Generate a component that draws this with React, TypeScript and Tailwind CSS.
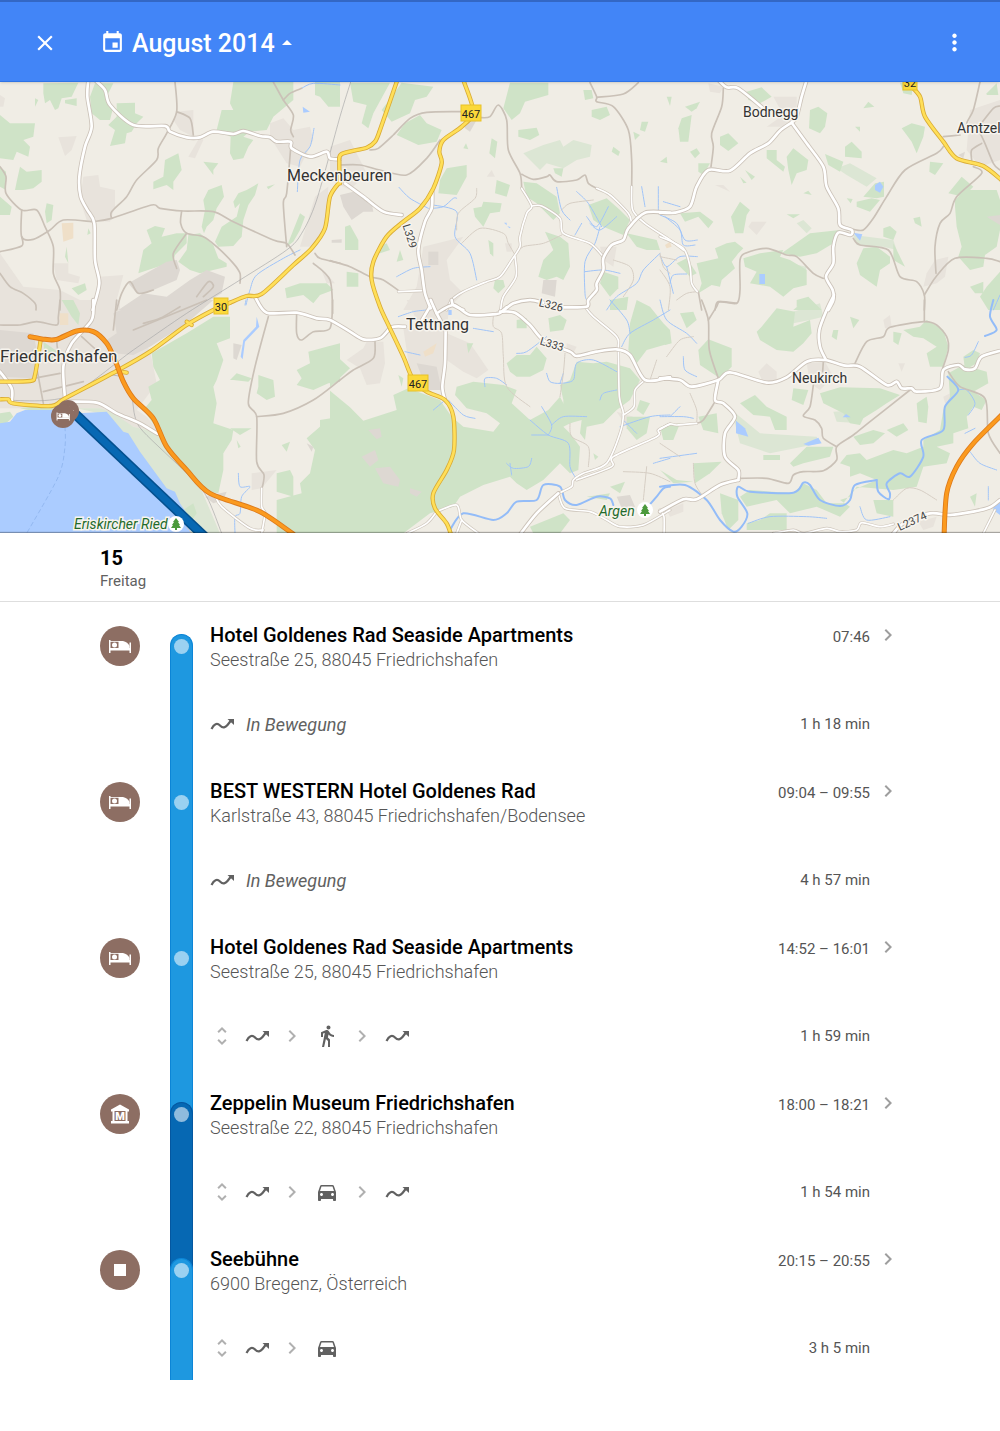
import type { ComponentType } from "react";
import {
  MdArrowDropUp,
  MdChevronRight,
  MdClose,
  MdDirectionsCar,
  MdDirectionsWalk,
  MdEvent,
  MdMoreVert,
  MdUnfoldMore,
} from "react-icons/md";

type Layer =
  | "urban"
  | "park"
  | "meadow"
  | "built"
  | "sand"
  | "water"
  | "stream"
  | "river"
  | "lane"
  | "minor"
  | "street"
  | "road"
  | "yellow"
  | "orange"
  | "rail";

interface Tile {
  x: number;
  y: number;
  shapes: Partial<Record<Layer, string[]>>;
}

// Tile geometry is stored at three units per map pixel.
const tiles: Tile[] = [
  {
    x: 0,
    y: 0,
    shapes: {
      urban: [
        "250,530 295,525 300,560 345,570 345,620 330,665 260,660 240,600",
        "810,370 850,355 880,390 930,380 940,420 900,500 860,490 810,410",
        "530,335 580,330 580,410 540,390 520,360",
        "300,830 370,825 350,900 340,930 270,930 300,880",
        "160,790 205,790 205,820 240,830 235,850 170,840",
        "175,412 230,408 215,450 195,468",
        "600,410 565,470 585,475 610,420",
        "0,760 70,860 180,870 240,900 240,930 0,930",
        "945,590 985,560 980,660 940,740 900,740",
        "0,285 15,295 10,320 0,320",
        "960,800 1005,850 980,850",
      ],
      built: [
        "385,850 500,785 530,780 540,810 530,840 460,870 430,882 410,880",
        "355,930 430,880 500,890 570,840 620,810 675,830 665,880 580,930",
      ],
      park: [
        "0,345 30,370 105,370 100,410 70,420 90,440 85,470 50,455 40,480 0,475",
        "60,500 80,515 125,510 125,545 100,565 70,570 45,570 50,545",
        "0,590 35,620 30,645 0,645",
        "0,500 18,515 18,570 0,560",
        "130,250 235,248 215,290 185,295 175,325 165,330 150,300 135,310 130,280",
        "105,295 115,300 105,320",
        "195,300 230,295 230,318 195,310",
        "285,250 340,250 320,290 340,320 330,360 300,360 275,340 270,290",
        "350,310 405,308 405,340 430,350 410,370 395,395 380,400 375,430 330,438 345,390 325,375 350,350",
        "700,246 880,246 880,300 820,350 800,390 750,395 730,410 760,420 745,440 730,475 700,480 690,460 692,410 650,390 665,330 700,330 690,310",
        "945,246 1020,246 1020,320 985,320 960,290 945,285",
        "495,480 535,460 545,510 520,545 520,570 500,555 460,568 460,545 490,530",
        "610,485 655,490 640,510 640,525",
        "625,570 665,555 672,590 650,625 640,660 620,680 612,700 605,680 615,630 610,600",
        "715,580 740,570 775,550 765,585 745,615 730,660 725,710 700,738 655,740 645,725 665,680 710,650 720,610 705,625 700,605",
        "440,690 465,678 495,685 485,710 530,700 560,700 560,730 525,765 520,785 460,805 415,820 430,750 455,730",
        "565,705 600,700 640,735 655,775 680,790 680,800 600,820 570,810 535,785 560,750",
        "855,865 900,850 980,850 1000,870 960,885 940,910 910,885 860,895",
        "140,610 160,615 155,660 140,670 135,635",
        "215,865 255,850 260,870 235,885",
        "900,640 915,650 900,690 880,725 860,740 880,690",
        "800,560 825,553 805,568",
        "200,740 205,790 195,770",
        "265,685 272,700 262,705",
      ],
      sand: ["185,670 220,668 220,715 190,725"],
      stream: [
        "905,265 940,250 1020,255",
        "942,385 930,440 900,480 892,575",
        "900,750 850,775 770,825 750,870 738,915",
      ],
      water: ["908,320 930,335 910,338"],
      minor: [
        "525,246 530,335 500,400 475,445 470,480 410,540 380,590 335,635 335,655",
        "530,335 570,355 580,405",
        "280,665 335,655 455,615 480,625 550,633 640,635 700,665 820,720 860,730 885,765",
        "545,633 542,670 560,700 610,710 650,740 700,790 720,820 720,850",
        "560,700 520,760 530,805",
        "0,500 18,530 18,580 65,630 110,630 135,680 160,740 160,820 180,870 180,930",
        "65,630 65,710 100,718 150,690 190,660 275,665",
        "0,755 65,738 65,710",
        "0,820 30,860 70,880 105,910 108,930",
        "820,246 850,300 880,345 872,390 880,410",
        "850,300 870,280 905,265",
        "872,445 860,580 850,610 860,740",
        "945,760 960,775 1020,790",
        "940,790 990,840 998,940",
        "350,930 365,880 390,845 415,880 460,870",
        "590,890 625,845 640,860 610,890",
      ],
      road: [
        "265,240 262,290 275,380 255,440 238,530 242,590 262,630 283,670 285,780 298,850 278,930",
        "285,240 315,270 330,315 400,375 495,378 510,395 560,412 600,412 640,395 700,402 730,393 780,408 810,412 830,425 872,425 875,445 930,470 980,455 990,475 1020,478",
      ],
      yellow: [
        "690,908 740,888 785,882 880,795 935,745 975,685 990,590 1020,545",
      ],
      rail: ["1052,246 1020,350 950,600 905,700 860,750 720,840 560,940 400,1050 200,1190 0,1200"],
    },
  },
  {
    x: 990,
    y: 240,
    shapes: {
      urban: [
        "280,500 400,470 350,540 360,600 400,640 350,690 220,690 260,620 270,560",
        "0,200 60,180 110,280 60,330 0,300",
        "810,500 860,500 850,560 820,540",
        "470,290 485,270 495,290",
        "525,490 545,490 545,515 530,515",
      ],
      built: [
        "30,345 70,335 125,370 130,395 100,395 65,420 40,380",
        "400,120 440,120 420,155 405,145",
        "295,515 325,515 325,555 295,555",
        "640,600 680,600 675,650 635,640",
        "5,480 35,478 35,488 5,488",
      ],
      park: [
        "0,8 20,8 25,60 0,78",
        "60,8 180,8 130,100 115,145 95,130 110,75 70,65",
        "215,8 310,20 290,50 255,60 240,100 185,125 155,90 185,50",
        "225,130 270,105 290,130 335,150 320,185 265,195 200,165",
        "540,8 655,8 655,45 585,65 570,100 545,120 520,85",
        "485,175 502,185 495,235 478,220",
        "565,150 620,143 628,165 600,180 565,170",
        "350,265 410,255 410,290 380,345 325,340 330,300",
        "500,300 540,315 530,350 495,340",
        "430,385 455,380 460,365 515,370 510,395 480,400 460,440 435,410",
        "580,305 620,310 680,350 690,400 670,420 620,370 590,350",
        "645,455 690,470 715,490 720,560 700,600 680,590 650,600 625,590 640,540 670,510",
        "775,375 830,355 870,390 900,420 880,465 820,440 790,420",
        "890,460 980,480 990,510 950,510 920,500",
        "820,575 865,590 865,625 840,650 810,610",
        "785,90 830,80 840,105 810,120 785,110",
        "760,30 785,30 790,55 765,60",
        "850,200 870,215 865,228 845,215",
        "935,125 955,125 945,155 930,150",
        "910,155 930,165 915,180",
        "45,440 60,435 85,480 85,510 45,510",
        "50,575 85,580 85,620 50,620",
        "495,600 520,600 525,620 505,640 490,625",
        "840,660 895,650 890,690 840,690",
        "145,500 170,490 180,510 150,520",
        "210,510 220,540 200,545",
        "670,265 700,265 695,290 675,280",
        "400,205 408,190 415,208",
        "475,480 490,490 490,530 480,520",
        "990,245 1010,230 1012,250",
      ],
      meadow: [
        "640,195 690,180 700,200 730,180 785,195 780,230 740,240 700,265 650,250 630,270 580,220",
      ],
      stream: [
        "207,322 240,355 295,385",
        "305,385 340,380 370,355 380,355",
        "310,375 380,395 375,470 420,520 440,600",
        "200,590 250,565 300,560",
        "740,335 775,370 815,440",
        "770,410 800,440 835,380",
        "780,430 810,450 860,410",
        "810,440 795,490 765,545 765,640 770,660",
        "680,322 695,390 720,420",
        "735,465 755,430",
        "765,575 820,570 870,580",
        "990,520 940,570 920,610 860,650 830,690",
        "935,320 945,380",
        "985,320 985,390",
      ],
      water: ["522,428 530,428 530,436", "532,438 542,442 538,445"],
      lane: [
        "440,325 435,355 385,400 380,450",
        "395,490 450,445 520,460 535,490 555,525",
        "555,525 580,500 640,490 695,465",
        "695,390 720,370 790,360",
        "850,540 900,560 910,600 880,650",
        "990,520 1000,560 1020,580",
      ],
      minor: [
        "120,210 145,205 190,165 240,115 290,97 395,95",
        "30,255 90,255 150,270 230,285 290,235 330,180",
        "450,113 480,110 505,75 530,120 535,210 570,280 575,325",
        "575,283 610,298 650,290 660,285 680,305 740,300 765,285 775,310 800,325",
        "780,8 800,50 800,65 850,80 895,150 905,240 905,320",
        "800,52 880,42 925,8",
        "0,542 60,560 120,590 160,600 210,635",
      ],
      street: [
        "575,325 605,378 590,400 570,470 570,500 545,540 510,590 470,605 400,635 365,660 350,690",
        "605,378 635,378 690,415 700,460 780,490 820,530",
        "800,325 840,345 895,400 905,430",
        "905,320 908,390 945,430 1020,480 1060,510",
        "555,530 558,590 520,650 512,690",
        "205,635 275,632",
      ],
      road: [
        "45,310 100,350 160,395 215,405",
        "307,335 305,385 285,425 265,510 275,570 285,640 302,685",
        "1020,398 945,398 895,445 880,480 845,495 820,535 820,570 800,610 800,630 775,660 770,680 700,682",
        "520,692 550,670 600,660 640,668",
        "365,660 370,675 400,690",
      ],
      yellow: [
        "400,0 430,95 395,140 340,180 328,215 335,250 310,325 270,385 220,425 170,470 130,545 125,600 150,680 180,745 220,830 250,900 290,935 345,960 370,1010 372,1110 350,1170 310,1240 315,1285 350,1330 365,1370",
        "202,0 150,150 135,185 110,203 35,222 28,250 30,310",
      ],
    },
  },
  {
    x: 1980,
    y: 0,
    shapes: {
      urban: [
        "340,290 410,290 410,350 380,380 320,380 370,345",
        "145,250 190,260 180,280 150,275",
        "930,330 1020,300 1020,480 960,500 920,450",
        "825,780 865,770 855,830 830,850 790,860 800,820",
        "275,665 320,665 290,705 265,680",
        "165,555 190,555 210,575",
      ],
      built: ["895,465 915,455 910,475", "980,650 1020,645 1020,675"],
      park: [
        "260,275 305,262 335,290 300,310 265,300",
        "65,355 95,345 85,425 60,425 55,385",
        "75,320 120,305 110,325 95,335",
        "20,290 35,290 30,318",
        "180,410 205,400 235,430 205,453 180,435",
        "90,455 110,445 120,460 105,475",
        "115,490 150,490 130,525 115,515",
        "450,330 475,320 502,340 495,380 480,400 447,385",
        "320,450 350,450 350,480 375,500 370,515 320,475",
        "380,470 400,445 445,480 440,510 410,520 395,555 385,510",
        "495,462 550,485 540,515 505,495",
        "555,440 575,425 605,455 605,475 555,470",
        "590,605 635,595 660,600 630,635 590,620",
        "645,550 672,545 672,590 650,595 610,590",
        "240,605 270,630 260,645 250,700 225,700 213,650",
        "60,640 120,635 160,665 145,685 115,650 75,665",
        "725,385 755,370 795,380 790,410 770,460 755,425",
        "610,325 625,305 643,320",
        "585,380 600,380 600,395",
        "810,485 850,490 825,525 808,515",
        "760,655 780,650 785,680 765,670",
        "885,600 915,570 1010,570 1020,600 1020,690 1010,740 975,765 970,800 930,810 895,770 905,740 890,680 885,620",
        "865,580 905,530 940,560 910,590",
        "110,790 175,775 165,745 200,730 225,725 250,745 235,760 215,785 225,805 185,840 180,860 155,855 115,880 125,850",
        "250,775 300,760 370,750 360,770 390,780 440,810 440,855 400,865 370,890 330,860 270,850 290,815 255,800",
        "365,760 450,700 540,690 520,730 470,760 420,770",
        "590,790 610,745 650,740 690,770 690,790 660,810 650,860 600,825",
        "700,730 735,800 700,780",
        "670,685 690,678 710,695 700,720 670,710",
        "930,860 970,845 970,880 945,880",
        "980,860 1020,815 1020,930 985,930 960,890",
        "400,930 445,890 485,930",
        "980,280 1010,250 1015,285 980,285",
        "50,790 80,775 110,820 90,830",
        "380,643 420,643 400,655",
        "430,580 445,572 455,585",
        "720,248 760,250 755,285 730,280",
        "560,595 578,597 572,610",
        "240,530 260,548 250,550",
        "255,510 285,530 275,540",
      ],
      meadow: [
        "530,505 570,490 650,535 620,560 560,525",
        "580,705 700,720 710,750 670,740 590,735",
        "410,670 430,660 455,685 440,700",
        "390,790 440,800 430,850 400,850",
      ],
      stream: [
        "10,605 60,620",
        "0,645 50,670 75,720 112,720",
        "15,650 60,690 70,735 105,735",
        "0,765 20,800 60,770 112,770",
        "1020,885 1000,930",
        "30,850 40,825 80,822",
        "20,800 40,880",
      ],
      water: [
        "645,555 660,545 670,560 660,578 645,570",
        "580,698 607,703 600,722",
        "298,822 315,822 315,852 298,852",
      ],
      sand: ["15,735 30,725 35,740 20,745"],
      lane: ["0,810 30,860 25,930", "50,900 80,880 112,875", "0,770 50,780"],
      minor: [
        "190,265 185,320 155,400 160,440 153,500",
        "960,246 940,330 920,375 960,400 1000,490 1020,510",
        "900,405 850,410",
        "935,480 935,450 965,430",
        "850,440 830,460 735,510 680,590 640,655 610,690 580,688",
        "940,500 965,520 890,590 870,640 840,670 825,740 828,820",
        "580,715 600,735 685,750 720,830 770,845 793,885 793,930",
        "793,885 828,830 885,775 980,775 1020,785",
        "960,375 1000,325 1020,318",
        "165,930 175,905 230,910 240,870 240,780 260,758 320,745 380,765 410,770 460,820 490,835",
        "115,875 125,930",
      ],
      street: ["0,710 70,745 90,800 95,850 112,875"],
      road: [
        "175,240 200,262 235,265 310,325",
        "440,240 425,290 410,350 395,368",
        "395,368 360,392 325,430 270,460 210,512 145,510 110,560 90,620 45,638 0,638",
        "395,368 440,430 490,500 500,560 535,625 540,675 575,690 572,705 535,698 520,740 520,790 498,830 518,870 520,900 505,930",
      ],
      yellow: ["750,255 780,290 795,350 850,425 890,475 970,498 1030,545"],
    },
  },
  {
    x: 0,
    y: 900,
    shapes: {
      urban: [
        "0,0 360,0 360,60 450,150 470,250 440,290 410,330 440,350 480,400 400,380 300,325 0,325",
        "755,520 830,510 785,565 755,570",
        "430,440 465,420 475,430 445,450",
      ],
      built: [
        "0,90 100,100 110,150 100,235 0,230",
        "340,40 430,0 640,0 560,70 450,140 400,165 340,160 320,120 350,100",
        "700,130 725,135 710,180 700,175",
        "615,590 680,575 670,600 640,610",
        "920,430 940,440 935,455",
      ],
      meadow: [
        "230,325 300,325 340,340 400,380 480,400 500,440 600,560 660,700 560,700 500,600 420,480 320,345",
      ],
      park: [
        "0,340 30,335 40,350 20,368 0,375",
        "60,325 120,318 160,325 150,340 110,335",
        "690,50 690,115 650,130 670,180 650,240 640,260 650,310 640,370 700,390 695,420 670,460 670,510 655,580 620,575 500,440 480,400 430,330 455,300 445,260 480,240 460,200 455,160 560,100 640,50",
        "925,155 980,140 1020,130 1020,245 985,250 940,270 890,255 905,235 890,210 930,190",
        "775,225 820,240 825,290 800,300 770,280 775,260",
        "690,240 710,220 755,235 745,245 700,240",
        "690,385 755,385 720,405",
        "845,435 870,425 860,455",
        "1020,350 960,360 960,380 920,415 945,450 930,520 900,550 905,580 830,600 830,700 1020,700",
        "830,520 870,510 880,530 880,590 830,575",
        "185,0 220,0 240,40 235,75 215,50",
        "130,125 180,160 150,180 135,170",
        "710,420 722,440 715,445",
        "550,630 580,610 590,640 570,670",
      ],
      sand: ["178,40 205,40 205,75 180,75"],
      water: [
        "0,370 30,365 50,340 75,330 110,330 160,330 235,340 320,335 370,395 385,400 420,455 500,565 525,575 540,610 560,640 575,710 0,710",
        "770,50 778,80 735,125 728,178 722,170 730,120 768,80",
      ],
      stream: [
        "738,0 735,15",
        "715,520 720,560 750,560 725,590 720,640 705,650 705,700",
      ],
      lane: ["560,680 575,700"],
      minor: [
        "0,75 60,75 110,65 170,75 175,50 180,0",
        "340,90 350,0",
        "770,350 850,340 940,300 1020,240 1060,210 1120,175 1125,125",
        "805,50 765,200 745,310 770,350 770,485 792,525 785,570",
        "890,40 890,100 905,120 940,95 990,85 998,0",
        "100,150 130,310",
        "100,235 180,220",
        "130,275 250,245",
        "170,120 180,160 250,180",
        "245,110 300,160",
        "400,90 620,0",
        "430,70 480,55 540,20",
      ],
      street: [
        "785,565 785,620 795,640 785,700",
        "645,585 665,620 750,685 790,690",
      ],
      road: [
        "280,0 275,60 215,130 190,200 195,295",
        "0,215 35,265 35,305",
        "190,305 290,308 350,340 420,370 470,400 480,400",
        "765,-10 800,38 890,38 950,55 990,60 1050,95 1090,118 1140,115 1175,82 1215,80",
      ],
      yellow: [
        "0,245 90,243 105,225 122,120",
        "350,213 380,218",
        "560,65 575,75",
        "0,298 25,298 40,310 155,318 195,295 350,213 450,155 560,75 640,30 690,8",
      ],
      orange: [
        "90,110 135,118 170,118 230,93 280,95 320,130 345,180 370,245 400,295 460,355 500,440 560,510 630,580 780,635 890,710",
      ],
      rail: ["335,225 370,235 395,290 405,350 430,395 560,520 620,590 665,700"],
    },
  },
  {
    x: 990,
    y: 900,
    shapes: {
      urban: [
        "50,180 100,145 110,125 160,125 165,190 150,250 110,255 90,205",
        "220,85 340,90 340,250 290,270 240,220",
        "350,100 420,130 475,210 440,235 400,215 350,180",
        "860,335 910,350 890,380",
        "710,130 740,140 730,160 710,155",
        "230,0 360,0 350,90 260,60",
      ],
      park: [
        "0,150 60,205 0,262",
        "0,272 60,322 100,362 200,330 190,285 235,265 330,300 365,350 400,380 490,395 510,370 470,340 410,325 375,285 380,260 430,245 520,255 560,270 545,310 600,360 655,330 690,290 700,310 740,360 700,380 720,400 750,440 745,510 720,520 690,490 640,540 590,570 560,550 540,530 460,555 390,590 370,620 300,640 220,700 0,700",
        "530,190 560,165 600,165 620,140 650,175 640,210 600,230 560,230 540,215",
        "690,255 720,240 740,185 790,190 830,185 900,205 930,240 900,300 860,330 820,370 770,380 765,420 750,400 755,360 720,370 700,340 700,300",
        "655,55 690,45 710,60 700,90 660,95",
        "560,60 590,55 590,85 560,85",
        "900,70 920,0 960,20 1000,70 1020,90 1020,130 950,150 920,190 895,150",
        "890,350 960,350 950,400 920,420 890,385",
        "840,560 885,545 870,580",
        "930,300 960,310 940,345 920,330",
        "600,680 700,640 720,660 690,700 610,700",
        "770,590 840,580 830,600",
        "790,460 805,470 795,480",
        "205,225 220,235 215,260",
        "410,130 430,130 415,160",
      ],
      meadow: ["565,430 610,410 625,455"],
      built: [
        "115,390 150,385 155,410 140,418",
        "95,470 135,450 145,480 120,500",
        "135,505 180,500 210,540 205,560 160,550",
        "240,565 275,575 260,590 240,580",
        "860,590 900,585 915,620 880,635",
        "260,190 320,200 335,270 290,270",
      ],
      sand: ["280,155 320,130 310,160 285,170"],
      water: ["355,30 365,30 365,45 355,45"],
      stream: [
        "225,155 270,165",
        "205,50 250,35 290,30",
        "310,330 340,305",
        "355,300 400,345 435,355",
        "465,260 465,235 500,235 530,255",
        "600,360 655,405 715,430 720,500 735,530",
        "635,320 665,375 655,405",
        "605,405 655,405",
        "665,375 700,350 770,350",
        "560,160 590,155 650,110",
        "650,220 660,245 690,250 730,240 740,190 790,180 860,215",
        "700,220 690,250",
        "540,490 545,525",
        "530,490 550,505 595,500 605,475",
        "870,380 960,350 1020,345",
        "1020,30 970,60 900,100 875,140",
        "840,0 890,60 900,100",
        "880,360 920,400",
        "1020,475 970,490",
        "860,270 820,280 810,300",
        "430,85 490,95",
      ],
      river: [
        "360,690 400,640 490,660 530,640 560,605 620,600 640,555 690,560 705,600 740,615 800,590 840,595 850,615",
        "945,630 980,590 1000,565 1020,560",
      ],
      lane: [
        "490,50 490,80 515,100 520,170 530,260 600,320",
        "880,515 960,520 1020,545",
        "705,160 700,220 690,290",
        "720,370 725,410 775,440 775,500",
        "950,500 940,600",
        "980,180 960,240",
      ],
      street: [
        "765,20 790,50 860,110 865,148 868,290 880,340 870,400 830,490 760,520 730,540 725,560 685,580",
        "945,240 915,270 912,320 880,345",
        "1020,372 985,390 980,410 850,470 845,500 740,540",
        "685,580 705,625 780,635 830,660 870,680 940,675 1020,630",
        "320,635 380,615 395,660 445,700",
        "232,700 290,670 320,635",
        "395,660 380,700",
      ],
      road: [
        "300,20 270,70",
        "302,0 320,40 347,90",
        "320,40 370,15 420,45 500,42 515,35 530,22",
        "510,35 555,38 600,75 640,120 720,155 740,168 800,155 860,148 900,165 945,240 1020,232",
        "347,85 345,190 337,260 345,300",
        "685,580 620,640 565,710",
      ],
    },
  },
  {
    x: 1980,
    y: 900,
    shapes: {
      urban: [
        "295,215 320,190 350,215 350,245 310,250",
        "440,190 495,185 520,230 480,270 450,250",
        "850,290 880,275 880,305 855,310",
        "715,190 735,190 725,215",
        "670,60 690,45 695,80 675,85",
        "775,665 830,650 820,680 790,690",
        "20,630 70,610 70,635 30,650",
      ],
      park: [
        "115,150 145,118 215,145 215,200 180,235 120,195",
        "305,80 350,25 405,35 400,80 450,60 455,100 430,130 400,155 350,150 300,120 290,95",
        "570,50 598,60 580,85",
        "520,90 535,90 530,120 515,110",
        "730,90 780,80 800,60 850,90 865,140 850,200 810,200 800,160 830,140 790,115 760,110",
        "700,95 725,100 715,135 700,125",
        "910,170 940,150 960,160 950,190 915,210",
        "865,220 910,195 980,215 985,250 940,275 980,300 965,330 940,320 920,350 925,385 880,400 880,430 830,440 870,460 860,490 790,500 770,560 700,570 590,560 570,590 540,600 570,620 540,650 470,620 390,640 350,600 260,620 240,590 270,570 400,580 430,550 470,570 500,610 550,610 580,570 650,540 600,520 570,530 570,500 540,490 560,465 600,460 620,480 700,450 740,460 790,440 790,420 840,390 850,330 870,290",
        "480,280 540,262 660,265 720,285 680,310 650,330 610,355 600,375 570,370 550,340 490,310",
        "400,265 445,270 430,315 395,300",
        "240,310 285,285 320,320 380,350 380,390 345,390 330,350 280,345",
        "580,410 640,390 675,400 640,430 600,435",
        "770,310 800,290 805,320 800,370 775,365",
        "390,490 440,440 520,440 510,470 430,490 400,500",
        "680,390 730,370 745,390 710,410",
        "115,350 170,340 175,400 130,390",
        "100,490 185,485 150,520 105,550",
        "180,580 235,600 235,660 205,690 185,640",
        "310,465 360,465 360,480 310,480",
        "930,590 950,580 945,620",
        "260,670 300,660 330,640 380,640 380,690 260,690",
        "640,600 700,600 700,650 650,640",
        "0,380 60,370 40,420 10,420",
        "0,85 30,90 35,130 15,135",
        "60,40 100,35 110,60 80,85",
        "0,510 50,540 100,545 40,550",
        "410,0 445,-10 455,20 410,20",
      ],
      meadow: [
        "215,330 300,400 470,410 480,430 330,460 240,430",
        "400,35 480,10 490,50 450,60 400,70",
        "520,335 600,330 600,370 530,365",
      ],
      water: [
        "228,362 255,385 265,410 228,400",
        "430,432 475,413 485,430 445,437",
        "548,352 558,342 572,352",
        "1000,610 1020,605 1020,645 1000,630",
      ],
      river: [
        "0,560 75,555 140,600 180,660 220,695 245,680 262,640 232,590 235,560 270,575 400,578 430,548 450,555 480,600 540,618 570,600 585,555 650,540",
        "650,540 655,575 685,598 690,580 680,550 720,520 750,530 790,470 785,420 850,390 855,320 895,270 862,230",
        "1000,0 990,50 1010,90 975,108",
      ],
      stream: [
        "895,270 920,270 945,310 925,345",
        "955,125 935,165 915,172",
        "930,455 960,490 1010,510",
        "265,670 330,650 440,650 500,655",
        "600,620 620,660 690,650",
        "0,350 70,350 100,355",
        "0,475 110,460",
        "0,0 20,60 80,100 110,130",
        "70,170 75,210 110,230",
        "60,320 30,350",
        "915,400 945,385",
        "985,560 985,600",
      ],
      lane: [
        "100,110 60,120 20,170",
        "90,280 110,330 110,370",
        "700,600 740,565 780,570 830,600",
        "0,430 60,470",
        "100,490 105,550 130,590",
      ],
      minor: [
        "125,0 145,60 148,150 175,235",
        "145,60 170,20 180,5 230,10",
        "793,0 793,65",
        "585,190 620,125 670,110 690,82 793,65 830,75 860,110 865,150 848,205",
        "750,270 630,365 580,405 530,440 530,480 490,512 430,515 400,525 385,550 320,535 240,535",
        "460,255 450,320 430,348 465,360 485,385 490,415 530,440",
        "490,185 488,215",
        "865,215 900,260 975,295 985,400 1020,460",
        "165,305 130,360 110,370",
      ],
      street: [
        "110,370 50,375 30,372 0,388",
        "340,700 400,690 430,700 500,685 540,695 590,690 605,668 660,680 700,672",
        "0,630 12,650 12,710",
        "1005,630 990,660 970,700",
      ],
      road: [
        "30,232 0,235",
        "0,235 60,240 95,260 175,240 210,217 320,248 380,232 440,185 495,180 555,197 600,200 680,255 710,245 725,265 755,265 770,275 840,265 850,210 895,195 915,208 945,205 965,170 1030,150",
        "522,-15 500,30 478,90 480,140 497,178",
        "175,240 165,300 190,310 225,350 195,400 195,470 235,510 235,540",
        "235,540 180,555 110,598 70,598 0,635",
        "700,700 730,670 810,640 870,645 940,635 990,622 1020,600",
      ],
      orange: ["1030,340 940,430 890,500 860,580 852,710"],
    },
  },
];

const areaLayers: { layer: Layer; className: string }[] = [
  { layer: "urban", className: "fill-[#e8e3dc]" },
  { layer: "meadow", className: "fill-[#dce6d4]" },
  { layer: "park", className: "fill-[#cfe3c7]" },
  { layer: "built", className: "fill-[#ddd8d2]" },
  { layer: "sand", className: "fill-[#efdfc8]" },
  { layer: "water", className: "fill-[#abccff]" },
];

const lineLayers: { layer: Layer; className: string; width: number }[] = [
  { layer: "stream", className: "stroke-[#a0c4f8]", width: 3 },
  { layer: "river", className: "stroke-[#93bcf8]", width: 6 },
  { layer: "lane", className: "stroke-[#d6cec4]", width: 3 },
  { layer: "minor", className: "stroke-[#cac1b7]", width: 5 },
  { layer: "rail", className: "stroke-[#a8a8a8]", width: 2 },
  { layer: "street", className: "stroke-[#cfc7bd]", width: 9 },
  { layer: "street", className: "stroke-white", width: 5 },
  { layer: "road", className: "stroke-[#cbc2b8]", width: 13 },
  { layer: "road", className: "stroke-white", width: 8 },
  { layer: "yellow", className: "stroke-[#d9ab35]", width: 13 },
  { layer: "yellow", className: "stroke-[#ffdf58]", width: 8 },
  { layer: "orange", className: "stroke-[#dc7a1c]", width: 15 },
  { layer: "orange", className: "stroke-[#fb9a1e]", width: 10 },
];

const places = [
  { name: "Meckenbeuren", x: 287, y: 181, className: "text-[16px]" },
  { name: "Tettnang", x: 406, y: 330, className: "text-[16px]" },
  { name: "Friedrichshafen", x: 0, y: 362, className: "text-[17px]" },
  { name: "Bodnegg", x: 743, y: 117, className: "text-[14px]" },
  { name: "Amtzell", x: 957, y: 133, className: "text-[14px]" },
  { name: "Neukirch", x: 792, y: 383, className: "text-[14px]" },
];

const roadNames = [
  { name: "L329", x: 410, y: 236, angle: 72 },
  { name: "L326", x: 551, y: 305, angle: 14 },
  { name: "L333", x: 552, y: 344, angle: 17 },
  { name: "L2374", x: 912, y: 521, angle: -25 },
];

const shields = [
  { name: "467", x: 471, y: 113, width: 20 },
  { name: "467", x: 418, y: 383, width: 20 },
  { name: "30", x: 221, y: 306, width: 14 },
  { name: "32", x: 910, y: 82, width: 14 },
];

const reserves = [
  { name: "Eriskircher Ried", x: 74, y: 529, treeX: 176, treeY: 524 },
  { name: "Argen", x: 599, y: 516, treeX: 645, treeY: 510 },
];

// Runs a rounded curve through every point of a "x,y x,y" list.
function smoothPath(points: string) {
  const p = points.split(" ").map((pair) => pair.split(",").map(Number));
  let d = `M${p[0][0]} ${p[0][1]}`;
  for (let i = 0; i < p.length - 1; i++) {
    const before = p[i - 1] ?? p[i];
    const after = p[i + 2] ?? p[i + 1];
    const [x1, y1] = p[i];
    const [x2, y2] = p[i + 1];
    d += `C${x1 + (x2 - before[0]) / 7} ${y1 + (y2 - before[1]) / 7} ${x2 - (after[0] - x1) / 7} ${y2 - (after[1] - y1) / 7} ${x2} ${y2}`;
  }
  return d;
}

function BedShape() {
  return (
    <>
      <path d="M1 6h1.500v8h19V8.500H23V19h-1.500v-2.500h-19V19H1z" />
      <path d="M2 7h9v.8H2z" />
      <circle cx="6.500" cy="11" r="2.500" />
      <path d="M10.500 7h4.500c3 .6 5.500 2.500 6.500 5V14.500h-11z" />
    </>
  );
}

function MapView() {
  return (
    <svg
      className="block h-[451px] w-full bg-[#f0ede5]"
      viewBox="0 82 1000 451"
      preserveAspectRatio="xMidYMid slice"
      role="img"
      aria-label="Karte"
    >
      <g transform="scale(0.333333)">
        {areaLayers.map(({ layer, className }) => (
          <g key={layer} className={className}>
            {tiles.map((tile) => (
              <g key={`${tile.x}-${tile.y}`} transform={`translate(${tile.x} ${tile.y})`}>
                {tile.shapes[layer]?.map((points) => (
                  <polygon key={points} points={points} />
                ))}
              </g>
            ))}
          </g>
        ))}
        <path
          d={smoothPath("195,1280 195,1340 175,1430 80,1600")}
          className="fill-none stroke-[#86aee8]"
          strokeWidth="2"
          strokeDasharray="14 8"
        />
        {lineLayers.map(({ layer, className, width }, index) => (
          <g
            key={index}
            className={className}
            fill="none"
            strokeWidth={width}
            strokeLinejoin="round"
            strokeLinecap="round"
          >
            {tiles.map((tile) => (
              <g key={`${tile.x}-${tile.y}`} transform={`translate(${tile.x} ${tile.y})`}>
                {tile.shapes[layer]?.map((points) => (
                  <path key={points} d={smoothPath(points)} />
                ))}
              </g>
            ))}
          </g>
        ))}
      </g>

      {shields.map((shield) => (
        <g key={`${shield.name}-${shield.x}`}>
          <rect
            x={shield.x - shield.width / 2}
            y={shield.y - 8}
            width={shield.width}
            height="16"
            className="fill-[#fbd93a] stroke-[#e8c128]"
          />
          <text x={shield.x} y={shield.y + 5} textAnchor="middle" className="fill-[#222] text-[11px]">
            {shield.name}
          </text>
        </g>
      ))}

      <g className="fill-[#333] stroke-[#f7f4ee]" strokeWidth="3" strokeLinejoin="round" paintOrder="stroke">
        {places.map((place) => (
          <text key={place.name} x={place.x} y={place.y} className={place.className}>
            {place.name}
          </text>
        ))}
        {roadNames.map((road) => (
          <text
            key={road.name}
            transform={`translate(${road.x} ${road.y}) rotate(${road.angle})`}
            y="4"
            textAnchor="middle"
            className="fill-[#444] text-[11px]"
          >
            {road.name}
          </text>
        ))}
      </g>

      <line x1="72" y1="411" x2="206" y2="538" className="stroke-[#04508f]" strokeWidth="10" />
      <line x1="72" y1="411" x2="206" y2="538" className="stroke-[#0768b3]" strokeWidth="7" />

      {reserves.map((reserve) => (
        <g key={reserve.name}>
          <text
            x={reserve.x}
            y={reserve.y}
            className="fill-[#1f6b2c] stroke-[#f7f4ee] text-[14px] italic"
            strokeWidth="3"
            paintOrder="stroke"
          >
            {reserve.name}
          </text>
          <circle cx={reserve.treeX} cy={reserve.treeY} r="8" className="fill-white" />
          <path
            transform={`translate(${reserve.treeX} ${reserve.treeY})`}
            d="M0-6l3 4H2l2 3H3l2 3H1v2h-2V4h-4l2-3h-1l2-3h-1z"
            className="fill-[#4c9a3c]"
          />
        </g>
      ))}

      <circle cx="68" cy="411" r="11" className="fill-[#8d6e63]" />
      <path d="M67 407l3 0l4 4" className="fill-none stroke-white" />
      <circle cx="63" cy="416" r="12" className="fill-[#8d6e63]" />
      <g className="fill-white" transform="translate(56 409) scale(0.600)">
        <BedShape />
      </g>
    </svg>
  );
}

interface IconProps {
  className?: string;
}

function HotelIcon({ className }: IconProps) {
  return (
    <svg viewBox="0 0 24 24" className={className} fill="currentColor">
      <BedShape />
    </svg>
  );
}

function MuseumIcon({ className }: IconProps) {
  return (
    <svg viewBox="0 0 24 24" className={className} fill="currentColor">
      <path d="M12 2.500L3 7.500V9.500H4.500V19H3V21.500H21V19H19.500V9.500H21V7.500zM6.500 9H17.500V19H6.500z" fillRule="evenodd" />
      <text x="12" y="18" textAnchor="middle" className="text-[11px] font-black">
        M
      </text>
    </svg>
  );
}

function StopIcon({ className }: IconProps) {
  return (
    <svg viewBox="0 0 24 24" className={className} fill="currentColor">
      <rect x="6" y="6" width="12" height="12" />
    </svg>
  );
}

function MovingIcon({ className }: IconProps) {
  return (
    <svg viewBox="0 0 24 24" className={className}>
      <path
        d="M1.500 17c2.500-5 5.500-6.500 8.500-3.500s5.500 2 7.500-.500l3.500-4.500"
        fill="none"
        stroke="currentColor"
        strokeWidth="2.200"
      />
      <path d="M17.500 7h7v6.500z" fill="currentColor" />
    </svg>
  );
}

type IconType = ComponentType<IconProps>;

interface Stop {
  icon: IconType;
  title: string;
  address: string;
  time: string;
  duration: string;
  moves: IconType[];
  bar: string;
}

const lightBar = "bg-[#1e98e0] border-[#0c85d6]";
const darkBar = "bg-[#0668b3] border-[#0457a0]";

const stops: Stop[] = [
  {
    icon: HotelIcon,
    title: "Hotel Goldenes Rad Seaside Apartments",
    address: "Seestraße 25, 88045 Friedrichshafen",
    time: "07:46",
    duration: "1 h 18 min",
    moves: [],
    bar: lightBar,
  },
  {
    icon: HotelIcon,
    title: "BEST WESTERN Hotel Goldenes Rad",
    address: "Karlstraße 43, 88045 Friedrichshafen/Bodensee",
    time: "09:04 – 09:55",
    duration: "4 h 57 min",
    moves: [],
    bar: lightBar,
  },
  {
    icon: HotelIcon,
    title: "Hotel Goldenes Rad Seaside Apartments",
    address: "Seestraße 25, 88045 Friedrichshafen",
    time: "14:52 – 16:01",
    duration: "1 h 59 min",
    moves: [MovingIcon, MdDirectionsWalk, MovingIcon],
    bar: lightBar,
  },
  {
    icon: MuseumIcon,
    title: "Zeppelin Museum Friedrichshafen",
    address: "Seestraße 22, 88045 Friedrichshafen",
    time: "18:00 – 18:21",
    duration: "1 h 54 min",
    moves: [MovingIcon, MdDirectionsCar, MovingIcon],
    bar: darkBar,
  },
  {
    icon: StopIcon,
    title: "Seebühne",
    address: "6900 Bregenz, Österreich",
    time: "20:15 – 20:55",
    duration: "3 h 5 min",
    moves: [MovingIcon, MdDirectionsCar],
    bar: lightBar,
  },
];

function Moves({ moves }: { moves: IconType[] }) {
  if (moves.length === 0) {
    return (
      <div className="flex items-center gap-3 text-[#616161]">
        <MovingIcon className="h-6 w-6" />
        <span className="text-[18px] italic">In Bewegung</span>
      </div>
    );
  }

  return (
    <div className="flex items-center gap-[11px] text-[#616161]">
      <button type="button" aria-label="Details einblenden" className="text-[#b0b0b0]">
        <MdUnfoldMore className="h-6 w-6" />
      </button>
      {moves.map((Move, index) => (
        <div key={index} className="flex items-center gap-[11px]">
          {index > 0 && <MdChevronRight className="h-6 w-6 text-[#b0b0b0]" />}
          <Move className="h-6 w-6" />
        </div>
      ))}
    </div>
  );
}

function StopRow({ stop, newLeg, isLast }: { stop: Stop; newLeg: boolean; isLast: boolean }) {
  return (
    <li className="flex items-stretch">
      <div className="mt-1 flex h-10 w-10 items-center justify-center rounded-full bg-[#8d6e63] text-white">
        <stop.icon className="h-6 w-6" />
      </div>
      <div
        className={`z-10 mt-3 ml-[30px] flex w-[23px] justify-center border-x ${stop.bar} ${
          newLeg ? "rounded-t-full border-t pt-1" : "pt-[5px]"
        } ${isLast ? "mb-5" : "-mb-7"}`}
      >
        <span className="h-[15px] w-[15px] rounded-full bg-white/55" />
      </div>
      <div className="ml-[17px] min-w-0 flex-1">
        <div className="flex items-start justify-between">
          <div className="min-w-0">
            <h2 className="text-[20px] leading-[26px] font-medium text-black">{stop.title}</h2>
            <p className="text-[18px] leading-6 font-[350] text-[#565656]">{stop.address}</p>
          </div>
          <div className="flex items-start">
            <time className="pt-0.5 text-[15px] leading-[26px] text-[#555]">{stop.time}</time>
            <button type="button" aria-label={`${stop.title} öffnen`} className="mt-px -mr-[30px] ml-1.5 text-[#9e9e9e]">
              <MdChevronRight className="h-6 w-6" />
            </button>
          </div>
        </div>
        <div className={`mt-10 flex h-6 items-center justify-between ${isLast ? "mb-10" : "mb-[42px]"}`}>
          <Moves moves={stop.moves} />
          <span className="text-[15px] text-[#555]">{stop.duration}</span>
        </div>
      </div>
    </li>
  );
}

export default function App() {
  return (
    <div className="min-h-screen bg-white font-[Roboto,sans-serif]">
      <header className="relative z-10 flex h-[82px] items-center border-t-2 border-b border-t-[#3367c4] border-b-[#2f74e6] bg-[#4285f7] px-8 pt-0.5 text-white shadow-sm">
        <button type="button" aria-label="Schließen">
          <MdClose className="h-[26px] w-[26px]" />
        </button>
        <button type="button" className="ml-[42px] flex items-center">
          <MdEvent className="h-[25px] w-[25px]" />
          <span className="ml-[7px] pt-0.5 text-[25px] font-medium">August 2014</span>
          <MdArrowDropUp className="h-6 w-6" />
        </button>
        <button type="button" aria-label="Mehr" className="ml-auto">
          <MdMoreVert className="h-[27px] w-[27px]" />
        </button>
      </header>

      <MapView />

      <section>
        <div className="relative border-b border-[#dedede] px-[100px] pt-3 pb-2.5 shadow-[0_-1px_1px_rgba(0,0,0,0.3)]">
          <h1 className="text-[20px] leading-[26px] font-bold text-black">15</h1>
          <p className="text-[15px] leading-5 text-[#616161]">Freitag</p>
        </div>
        <ol className="pt-5 pr-[130px] pl-[100px]">
          {stops.map((stop, index) => (
            <StopRow
              key={stop.time}
              stop={stop}
              newLeg={index === 0 || stops[index - 1].bar !== stop.bar}
              isLast={index === stops.length - 1}
            />
          ))}
        </ol>
      </section>
    </div>
  );
}
